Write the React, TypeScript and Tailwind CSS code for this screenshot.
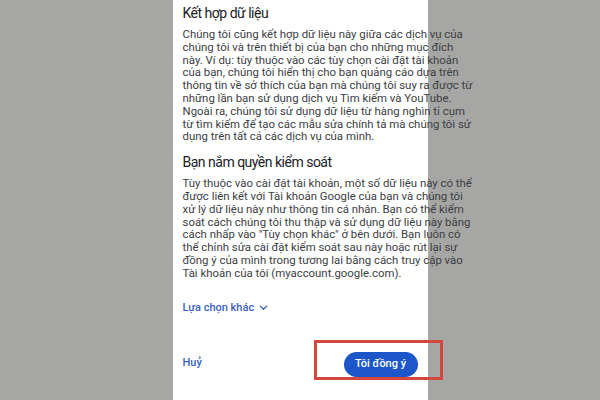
import React from 'react';

const combineLines = [
  'Chúng tôi cũng kết hợp dữ liệu này giữa các dịch vụ của',
  'chúng tôi và trên thiết bị của bạn cho những mục đích',
  'này. Ví dụ: tùy thuộc vào các tùy chọn cài đặt tài khoản',
  'của bạn, chúng tôi hiển thị cho bạn quảng cáo dựa trên',
  'thông tin về sở thích của bạn mà chúng tôi suy ra được từ',
  'những lần bạn sử dụng dịch vụ Tìm kiếm và YouTube.',
  'Ngoài ra, chúng tôi sử dụng dữ liệu từ hàng nghìn tỉ cụm',
  'từ tìm kiếm để tạo các mẫu sửa chính tả mà chúng tôi sử',
  'dụng trên tất cả các dịch vụ của mình.',
];

const controlLines = [
  'Tùy thuộc vào cài đặt tài khoản, một số dữ liệu này có thể',
  'được liên kết với Tài khoản Google của bạn và chúng tôi',
  'xử lý dữ liệu này như thông tin cá nhân. Bạn có thể kiểm',
  'soát cách chúng tôi thu thập và sử dụng dữ liệu này bằng',
  'cách nhấp vào "Tùy chọn khác" ở bên dưới. Bạn luôn có',
  'thể chỉnh sửa cài đặt kiểm soát sau này hoặc rút lại sự',
  'đồng ý của mình trong tương lai bằng cách truy cập vào',
  'Tài khoản của tôi (myaccount.google.com).',
];

function Paragraph({ lines }: { lines: string[] }) {
  return (
    <div className="text-[11.4px] leading-[12.8px] text-[#3c4043]">
      {lines.map((line, i) => (
        <div key={i} className="whitespace-nowrap">
          {line}
        </div>
      ))}
    </div>
  );
}

export default function App() {
  return (
    <div
      className="w-[600px] h-[400px] bg-[#a6a6a4] flex justify-center overflow-hidden"
      style={{ fontFamily: 'Roboto, "Noto Sans", sans-serif' }}
    >
      <div className="w-[255px] h-full bg-white pl-[10px] pr-[12px] pt-[3px]">
        <h2 className="text-[14px] leading-[20px] tracking-[-0.5px] text-[#202124]">Kết hợp dữ liệu</h2>
        <div className="mt-[5px]">
          <Paragraph lines={combineLines} />
        </div>

        <h2 className="mt-[9px] text-[14px] leading-[20px] tracking-[-0.5px] text-[#202124]">Bạn nắm quyền kiểm soát</h2>
        <div className="mt-[5px]">
          <Paragraph lines={controlLines} />
        </div>

        <div className="mt-[20px] flex items-center gap-[4px] text-[11px] font-medium text-[#3b5fc0]">
          <span>Lựa chọn khác</span>
          <svg width="11" height="11" viewBox="0 0 24 24" fill="none" stroke="#3b5fc0" strokeWidth="3" strokeLinecap="round" strokeLinejoin="round">
            <path d="M5 9l7 7 7-7" />
          </svg>
        </div>

        <div className="mt-[34px] flex items-center justify-between">
          <span className="text-[11px] font-medium text-[#3b5fc0]">Huỷ</span>
          <div className="relative mr-[-2px]">
            <button className="w-[74px] h-[25px] rounded-full bg-[#1c56c9] text-white text-[11px] font-medium">
              Tôi đồng ý
            </button>
            <div className="absolute left-[-30px] top-[-10px] w-[129px] h-[40px] border-[3px] border-[#d5473e]" />
          </div>
        </div>
      </div>
    </div>
  );
}
